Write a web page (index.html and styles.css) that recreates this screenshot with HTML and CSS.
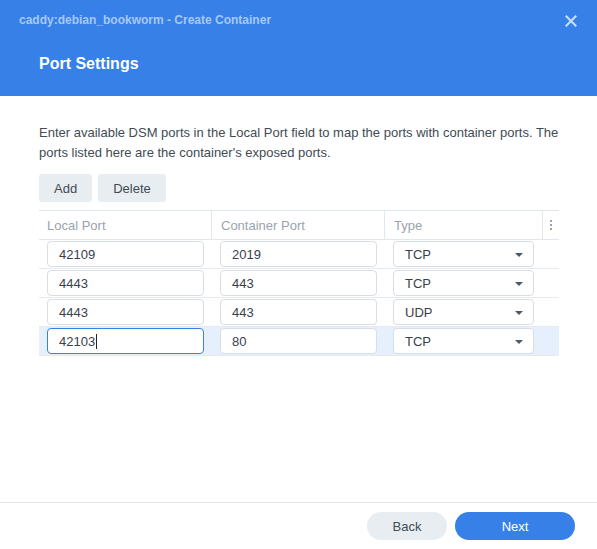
FILE: index.html
```html
<!DOCTYPE html>
<html>
<head>
<meta charset="utf-8">
<link rel="stylesheet" href="styles.css">
</head>
<body>
<div class="dialog">
  <div class="header">
    <div class="titlebar">
      <span class="title">caddy:debian_bookworm - Create Container</span>
      <svg class="close" width="12" height="12" viewBox="0 0 12 12"><path d="M1.5 1.5 L10.5 10.5 M10.5 1.5 L1.5 10.5" stroke="#c5dcfa" stroke-width="2.2" stroke-linecap="square"/></svg>
    </div>
    <div class="heading">Port Settings</div>
  </div>
  <div class="content">
    <p class="desc">Enter available DSM ports in the Local Port field to map the ports with container ports. The ports listed here are the container's exposed ports.</p>
    <div class="toolbar">
      <button class="btn">Add</button>
      <button class="btn">Delete</button>
    </div>
    <div class="table">
      <div class="row head">
        <div class="cell">Local Port</div>
        <div class="cell">Container Port</div>
        <div class="cell">Type</div>
        <div class="cell more"><span class="dots"></span></div>
      </div>
      <div class="row">
        <div class="cell"><div class="input">42109</div></div>
        <div class="cell"><div class="input">2019</div></div>
        <div class="cell"><div class="select">TCP<span class="arrow"></span></div></div>
        <div class="cell"></div>
      </div>
      <div class="row">
        <div class="cell"><div class="input">4443</div></div>
        <div class="cell"><div class="input">443</div></div>
        <div class="cell"><div class="select">TCP<span class="arrow"></span></div></div>
        <div class="cell"></div>
      </div>
      <div class="row">
        <div class="cell"><div class="input">4443</div></div>
        <div class="cell"><div class="input">443</div></div>
        <div class="cell"><div class="select">UDP<span class="arrow"></span></div></div>
        <div class="cell"></div>
      </div>
      <div class="row active">
        <div class="cell"><div class="input focus">42103<span class="caret"></span></div></div>
        <div class="cell"><div class="input">80</div></div>
        <div class="cell"><div class="select">TCP<span class="arrow"></span></div></div>
        <div class="cell"></div>
      </div>
    </div>
  </div>
  <div class="footer">
    <button class="pill back">Back</button>
    <button class="pill next">Next</button>
  </div>
</div>
</body>
</html>
```
FILE: styles.css
```css
* { box-sizing: border-box; }
html, body { margin: 0; padding: 0; }
body {
  font-family: "Liberation Sans", Arial, sans-serif;
  background: #fff;
  width: 597px;
  height: 549px;
  overflow: hidden;
}
.dialog {
  height: 549px;
  display: flex;
  flex-direction: column;
}
.header {
  background: #3780e8;
  height: 96px;
  flex: none;
}
.titlebar {
  display: flex;
  justify-content: space-between;
  align-items: center;
  padding: 12px 20px 0 19px;
  height: 28px;
}
.title {
  font-size: 12px;
  font-weight: bold;
  color: #a7c8f4;
}
.close { display: block; margin-top: 1px; }
.heading {
  padding: 26px 0 0 39px;
  font-size: 16px;
  font-weight: bold;
  color: #fff;
  line-height: 20px;
}
.content {
  flex: 1;
  padding: 27px 38px 0 39px;
}
.desc {
  margin: 0;
  font-size: 13px;
  line-height: 20px;
  color: #414b55;
}
.toolbar {
  display: flex;
  gap: 6px;
  margin-top: 11px;
}
.btn {
  font-family: inherit;
  font-size: 13px;
  color: #414b55;
  background: #e8edf2;
  border: none;
  border-radius: 3px;
  height: 28px;
  padding: 0 15px;
}
.table {
  margin-top: 8px;
  width: 520px;
  border-top: 1px solid #dfe5ec;
}
.row {
  display: grid;
  grid-template-columns: 172px 173px 158px 17px;
  height: 29px;
  border-bottom: 1px solid #e6eaef;
  align-items: center;
}
.row.head {
  height: 29px;
  border-bottom: 1px solid #e2e7ed;
}
.row.head .cell {
  height: 100%;
  display: flex;
  align-items: center;
  padding-left: 8px;
  font-size: 13px;
  color: #9aa3ad;
}
.row.head .cell + .cell { border-left: 1px solid #e2e7ed; }
.row.head .cell.more { padding-left: 0; justify-content: center; }
.dots {
  width: 2px;
  height: 2px;
  background: #9aa3ad;
  box-shadow: 0 -4px 0 #9aa3ad, 0 4px 0 #9aa3ad;
}
.cell { padding-left: 8px; height: 100%; display: flex; align-items: center; }
.row .cell:nth-child(2) { padding-left: 9px; }
.row .cell:nth-child(3) { padding-left: 9px; }
.row.active { background: #e6f0fc; }
.input, .select {
  height: 26px;
  border: 1px solid #d8dee5;
  border-radius: 4px;
  background: #fff;
  font-size: 13px;
  color: #38414b;
  padding-left: 11px;
  display: flex;
  align-items: center;
}
.input { width: 157px; }
.select { width: 141px; position: relative; }
.input.focus { border-color: #3780e8; }
.caret {
  display: inline-block;
  width: 1px;
  height: 15px;
  background: #222;
  margin-left: 1px;
}
.arrow {
  position: absolute;
  right: 10px;
  top: 11px;
  width: 0;
  height: 0;
  border-left: 4px solid transparent;
  border-right: 4px solid transparent;
  border-top: 4px solid #4f5963;
}
.footer {
  flex: none;
  height: 47px;
  border-top: 1px solid #e5e7ea;
  display: flex;
  justify-content: flex-end;
  align-items: flex-start;
  gap: 8px;
  padding: 9px 22px 0 0;
}
.pill {
  font-family: inherit;
  font-size: 13px;
  height: 28px;
  border: none;
  border-radius: 14px;
}
.back { width: 80px; background: #e8edf2; color: #414b55; }
.next { width: 120px; background: #3780e8; color: #fff; }
```
